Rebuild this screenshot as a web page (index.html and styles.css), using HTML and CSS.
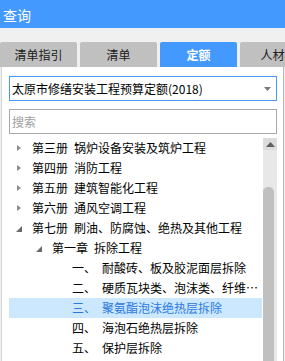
FILE: index.html
```html
<!DOCTYPE html>
<html lang="zh-CN">
<head>
    <meta charset="UTF-8">
    <title>查询</title>
    <link rel="stylesheet" href="styles.css">
</head>
<body>
    <div class="titlebar">查询</div>
    <div class="tabs">
        <div class="tab">清单指引</div>
        <div class="tab">清单</div>
        <div class="tab active">定额</div>
        <div class="tab">人材机</div>
    </div>
    <div class="panel">
        <div class="select">
            <span class="select-text">太原市修缮安装工程预算定额(2018)</span>
            <svg class="select-arrow" width="7" height="4" viewBox="0 0 7 4"><polygon points="0,0 7,0 3.5,4" fill="#7a7a7a"/></svg>
        </div>
        <input class="search" type="text" placeholder="搜索">
        <div class="tree">
            <div class="rows">
                <div class="row lv0"><span class="arrow closed"></span><span class="vol">第三册</span><span>锅炉设备安装及筑炉工程</span></div>
                <div class="row lv0"><span class="arrow closed"></span><span class="vol">第四册</span><span>消防工程</span></div>
                <div class="row lv0"><span class="arrow closed"></span><span class="vol">第五册</span><span>建筑智能化工程</span></div>
                <div class="row lv0"><span class="arrow closed"></span><span class="vol">第六册</span><span>通风空调工程</span></div>
                <div class="row lv0"><span class="arrow open"></span><span class="vol">第七册</span><span>刷油、防腐蚀、绝热及其他工程</span></div>
                <div class="row lv1"><span class="arrow open"></span><span class="vol">第一章</span><span>拆除工程</span></div>
                <div class="row lv2"><span class="arrow"></span><span class="num">一、</span><span class="txt">耐酸砖、板及胶泥面层拆除</span></div>
                <div class="row lv2"><span class="arrow"></span><span class="num">二、</span><span class="txt">硬质瓦块类、泡沫类、纤维类绝热层拆除</span></div>
                <div class="row lv2 selected"><span class="arrow"></span><span class="num">三、</span><span class="txt">聚氨酯泡沫绝热层拆除</span></div>
                <div class="row lv2"><span class="arrow"></span><span class="num">四、</span><span class="txt">海泡石绝热层拆除</span></div>
                <div class="row lv2"><span class="arrow"></span><span class="num">五、</span><span class="txt">保护层拆除</span></div>
                <div class="row lv1"><span class="arrow closed"></span><span class="vol">第二章</span><span>刷油工程</span></div>
            </div>
            <div class="scrollbar">
                <div class="scroll-up"><svg width="9" height="5" viewBox="0 0 9 5"><polygon points="0,5 9,5 4.5,0" fill="#606060"/></svg></div>
                <div class="thumb"></div>
            </div>
        </div>
    </div>
</body>
</html>
```

FILE: styles.css
```css
body {
    margin: 0;
    width: 285px;
    height: 361px;
    overflow: hidden;
    background-color: #f0f0f0;
    font-family: "Noto Sans CJK SC", "Noto Sans", sans-serif;
    font-size: 12px;
    color: #000;
}
.titlebar {
    height: 28px;
    line-height: 30px;
    padding-left: 3px;
    background-color: #4399fe;
    color: #fff;
    font-size: 14px;
}
.tabs {
    display: flex;
    gap: 3px;
    margin-top: 14px;
    height: 25px;
    overflow: hidden;
}
.tab {
    flex: 0 0 77px;
    height: 25px;
    line-height: 25px;
    text-align: center;
    background-color: #c0c0c0;
    color: #1a1a1a;
    border-radius: 2px 2px 0 0;
    white-space: nowrap;
}
.tab.active {
    background-color: #4399fe;
    color: #fff;
    font-weight: bold;
}
.panel {
    margin-left: 1px;
    width: 268px;
    height: 294px;
    padding: 9px 6px 0 7px;
    background-color: #fff;
    border-left: 1px solid #d6d6d6;
    border-right: 1px solid #b8b8b8;
    overflow: hidden;
}
.select {
    display: flex;
    align-items: center;
    height: 23px;
    border: 1px solid #4a9af5;
    padding: 0 5px 0 2px;
}
.select-text {
    flex: 1;
    white-space: nowrap;
}
.search {
    display: block;
    box-sizing: border-box;
    width: 100%;
    height: 25px;
    margin: 8px 0 4px;
    padding: 0 2px;
    border: 1px solid #a9a9a9;
    font-family: inherit;
    font-size: 12px;
    outline: none;
}
.search::placeholder {
    color: #a0a0a0;
}
.tree {
    display: flex;
}
.rows {
    flex: 1;
    min-width: 0;
}
.row {
    display: flex;
    height: 20px;
    line-height: 20px;
    white-space: nowrap;
}
.lv0 { padding-left: 7px; }
.lv1 { padding-left: 27px; }
.lv2 { padding-left: 47px; }
.arrow {
    flex: 0 0 16px;
    height: 20px;
    position: relative;
}
.arrow.closed::before {
    content: "";
    position: absolute;
    left: 1px;
    top: 7px;
    border-top: 3px solid transparent;
    border-bottom: 3px solid transparent;
    border-left: 4px solid #8c8c8c;
}
.arrow.open::before {
    content: "";
    position: absolute;
    left: 0;
    top: 8px;
    border-left: 6px solid transparent;
    border-bottom: 6px solid #6a6a6a;
}
.vol {
    margin-right: 6px;
}
.num {
    flex: 0 0 30px;
}
.txt {
    overflow: hidden;
    text-overflow: ellipsis;
}
.row.selected {
    background-color: #cce8ff;
    color: #2b78e4;
}
.scrollbar {
    flex: 0 0 14px;
    margin-left: 1px;
    height: 240px;
    background-color: #e8e8e8;
}
.scroll-up {
    height: 12px;
    display: flex;
    justify-content: center;
    align-items: center;
    background-color: #dcdcdc;
}
.thumb {
    width: 11px;
    height: 200px;
    margin-top: 37px;
    background-color: #c0c0c0;
    border-radius: 5px 5px 0 0;
}
```
